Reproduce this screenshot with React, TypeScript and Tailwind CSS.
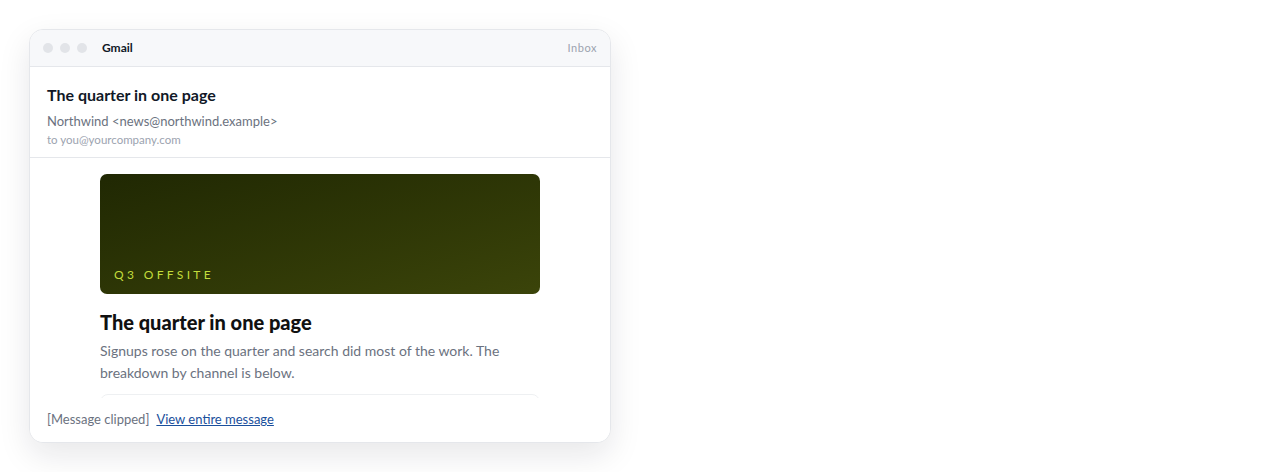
import React from "react";

const font = { fontFamily: '"Segoe UI", Lato, "Noto Sans", Arial, sans-serif' };

export default function App() {
  return (
    <div className="w-[1280px] h-[472px] bg-white" style={font}>
      <div className="pl-[29px] pt-[29px]">
        <div className="w-[582px] h-[414px] rounded-[14px] border border-[#e5e7eb] bg-white shadow-[0_12px_32px_rgba(15,23,42,0.10)] overflow-hidden flex flex-col">
          {/* window bar */}
          <div className="h-[37px] shrink-0 bg-[#f7f8fa] border-b border-[#e5e7eb] flex items-center px-[13px]">
            <div className="flex gap-[7px]">
              <span className="w-[10px] h-[10px] rounded-full bg-[#e2e4e8]" />
              <span className="w-[10px] h-[10px] rounded-full bg-[#e2e4e8]" />
              <span className="w-[10px] h-[10px] rounded-full bg-[#e2e4e8]" />
            </div>
            <span className="ml-[15px] text-[12px] font-bold text-[#111827]">Gmail</span>
            <span className="ml-auto text-[11px] tracking-[0.05em] text-[#9ca3af]">Inbox</span>
          </div>

          {/* message header */}
          <div className="shrink-0 border-b border-[#e5e7eb] px-[17px] pt-[17px] pb-[9px]">
            <h1 className="text-[16px] font-bold leading-[22px] text-[#111827]">The quarter in one page</h1>
            <p className="mt-[6px] text-[13px] leading-[18px] text-[#6b7280]">
              Northwind &lt;news@northwind.example&gt;
            </p>
            <p className="mt-[2px] text-[11.5px] leading-[16px] text-[#9ca3af]">to you@yourcompany.com</p>
          </div>

          {/* body */}
          <div className="relative flex-1 overflow-hidden">
            <div className="w-[440px] mx-auto pt-[16px]">
              <div className="h-[120px] rounded-[7px] bg-gradient-to-br from-[#202803] to-[#3b440a] flex items-end px-[14px] pb-[10px]">
                <span className="text-[12px] tracking-[0.28em] text-[#c3dc3c]">Q3 OFFSITE</span>
              </div>
              <h2 className="mt-[15px] text-[20px] font-black leading-[26px] text-[#111111]">
                The quarter in one page
              </h2>
              <p className="mt-[5px] text-[14px] leading-[22px] text-[#6b7280]">
                Signups rose on the quarter and search did most of the work. The breakdown by channel is below.
              </p>
              <div className="mt-[10px] h-[80px] rounded-[8px] border border-[#eef0f2]" />
            </div>
            <div className="absolute inset-x-0 bottom-0 h-[44px] bg-white px-[17px] flex items-center text-[13px]">
              <span className="text-[#6b7280]">[Message clipped]</span>
              <a href="#" className="ml-[7px] text-[#1a4f9c] underline">View entire message</a>
            </div>
          </div>
        </div>
      </div>
    </div>
  );
}
